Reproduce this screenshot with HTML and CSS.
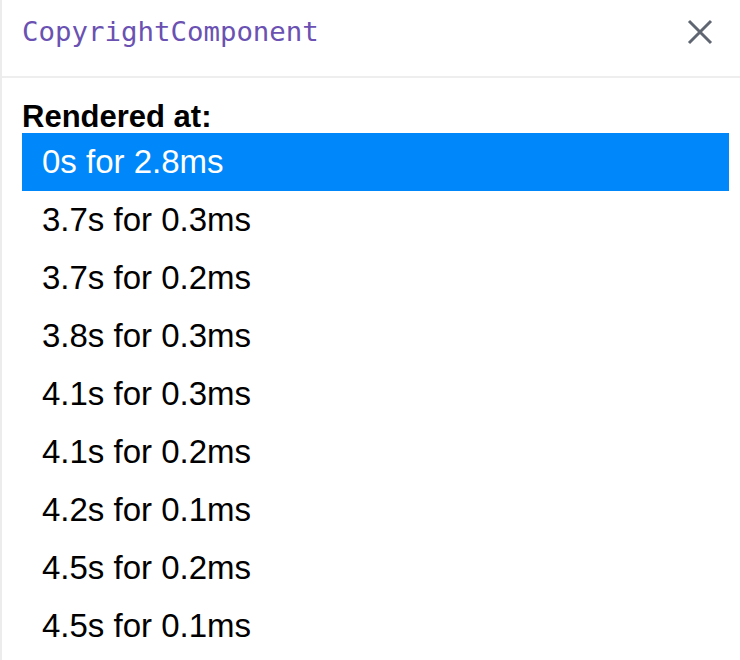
FILE: index.html
```html
<!DOCTYPE html>
<html>
<head>
<meta charset="utf-8">
<link rel="stylesheet" href="styles.css">
</head>
<body>
<div class="panel">
  <div class="header">
    <span class="title">CopyrightComponent</span>
    <button class="close" aria-label="Close">
      <svg width="26" height="26" viewBox="0 0 26 26"><path d="M2 2 L24 24 M24 2 L2 24" stroke="#5f6672" stroke-width="3" fill="none"/></svg>
    </button>
  </div>
  <div class="content">
    <div class="label">Rendered at:</div>
    <ul class="list">
      <li class="item selected">0s for 2.8ms</li>
      <li class="item">3.7s for 0.3ms</li>
      <li class="item">3.7s for 0.2ms</li>
      <li class="item">3.8s for 0.3ms</li>
      <li class="item">4.1s for 0.3ms</li>
      <li class="item">4.1s for 0.2ms</li>
      <li class="item">4.2s for 0.1ms</li>
      <li class="item">4.5s for 0.2ms</li>
      <li class="item">4.5s for 0.1ms</li>
    </ul>
  </div>
</div>
</body>
</html>
```
FILE: styles.css
```css
html, body {
  margin: 0;
  padding: 0;
  background: #fff;
}
.panel {
  border-left: 2px solid #ececec;
  height: 660px;
  box-sizing: border-box;
  font-family: "Liberation Sans", Arial, sans-serif;
}
.header {
  height: 76px;
  border-bottom: 2px solid #eeeeee;
  display: flex;
  align-items: center;
  justify-content: space-between;
  padding: 0 27px 0 20px;
}
.title {
  font-family: "DejaVu Sans Mono", monospace;
  font-size: 27.4px;
  color: #6a51b2;
  position: relative;
  top: -7px;
}
.close {
  background: none;
  border: 0;
  padding: 0;
  width: 26px;
  height: 26px;
  display: flex;
  position: relative;
  top: -6px;
}
.content {
  padding: 23px 11px 0 20px;
}
.label {
  font-weight: bold;
  font-size: 31px;
  line-height: 32px;
  color: #000;
}
.list {
  list-style: none;
  margin: 0;
  padding: 0;
}
.item {
  height: 58px;
  line-height: 58px;
  padding-left: 20px;
  font-size: 33px;
  color: #000;
}
.item.selected {
  background: #0088fa;
  color: #fff;
}
```
